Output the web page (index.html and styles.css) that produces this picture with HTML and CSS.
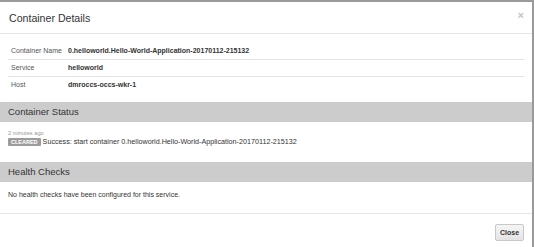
FILE: index.html
```html
<!DOCTYPE html>
<html lang="en">
<head>
    <meta charset="UTF-8">
    <title>Container Details</title>
    <link rel="stylesheet" href="styles.css">
</head>
<body>
    <div class="modal">
        <!-- Header -->
        <div class="modal-header">
            <h4 class="modal-title">Container Details</h4>
            <span class="close-x">&times;</span>
        </div>

        <!-- Details table -->
        <div class="modal-body">
            <table class="details">
                <tr>
                    <td class="label-cell">Container Name</td>
                    <td class="value-cell">0.helloworld.Hello-World-Application-20170112-215132</td>
                </tr>
                <tr>
                    <td class="label-cell">Service</td>
                    <td class="value-cell">helloworld</td>
                </tr>
                <tr>
                    <td class="label-cell">Host</td>
                    <td class="value-cell">dmroccs-occs-wkr-1</td>
                </tr>
            </table>
        </div>

        <!-- Status section -->
        <div class="section-title">Container Status</div>
        <div class="section-body status-body">
            <div class="time-ago">2 minutes ago</div>
            <div class="status-line">
                <span class="badge">CLEARED</span>
                Success: start container 0.helloworld.Hello-World-Application-20170112-215132
            </div>
        </div>

        <!-- Health checks section -->
        <div class="section-title">Health Checks</div>
        <div class="section-body health-body">
            No health checks have been configured for this service.
        </div>

        <div class="modal-footer">
            <button type="button" class="close-btn">Close</button>
        </div>
    </div>
</body>
</html>
```

FILE: styles.css
```css
* {
    box-sizing: border-box;
}

body {
    margin: 0;
    background-color: #9a9a9a;
    font-family: 'Liberation Sans', Arial, sans-serif;
    color: #333;
    height: 247px;
    overflow: hidden;
}

.modal {
    width: 532px;
    margin-top: 2px;
    background: #fff;
    height: 245px;
    overflow: hidden;
}

.modal-header {
    display: flex;
    justify-content: space-between;
    align-items: center;
    height: 32px;
    padding: 0 9px;
    border-bottom: 1px solid #e5e5e5;
}

.modal-title {
    margin: 0;
    font-size: 10.6px;
    font-weight: 400;
    color: #333;
}

.close-x {
    font-size: 11px;
    font-weight: 700;
    color: #c4c4c4;
    margin-right: -1px;
    margin-top: -5px;
}

.modal-body {
    padding: 8px 8px 9px;
}

.details {
    width: 100%;
    border-collapse: collapse;
    font-size: 7px;
}

.details td {
    height: 17px;
    padding: 0 3px;
    vertical-align: middle;
}

.details tr + tr td {
    border-top: 1px solid #e3e3e3;
}

.label-cell {
    width: 57px;
    color: #555;
    white-space: nowrap;
}

.value-cell {
    font-weight: 700;
    color: #333;
}

.section-title {
    height: 20px;
    line-height: 20px;
    padding: 0 8px;
    background: #cccccc;
    font-size: 9.5px;
    color: #333;
}

.section-body {
    padding: 0 8px;
    font-size: 7px;
}

.status-body {
    height: 40px;
    padding-top: 7px;
}

.time-ago {
    font-size: 5.7px;
    line-height: 8px;
    color: #999;
}

.status-line {
    font-size: 7.2px;
    line-height: 10px;
    display: flex;
    align-items: center;
    gap: 2px;
}

.badge {
    display: inline-block;
    background: #9c9c9c;
    color: #fff;
    font-size: 5.5px;
    font-weight: 700;
    line-height: 8px;
    padding: 0 3px;
    border-radius: 1px;
}

.health-body {
    height: 31px;
    padding-top: 8px;
    line-height: 10px;
}

.modal-footer {
    display: flex;
    justify-content: flex-end;
    padding: 10px 8px;
    border-top: 1px solid #e5e5e5;
}

.close-btn {
    height: 17px;
    width: 29px;
    padding: 0;
    font-family: 'Liberation Sans', Arial, sans-serif;
    font-size: 7px;
    font-weight: 700;
    color: #333;
    background: linear-gradient(#f5f5f5, #e4e4e4);
    border: 1px solid #c8c8c8;
    border-radius: 2px;
}
```
